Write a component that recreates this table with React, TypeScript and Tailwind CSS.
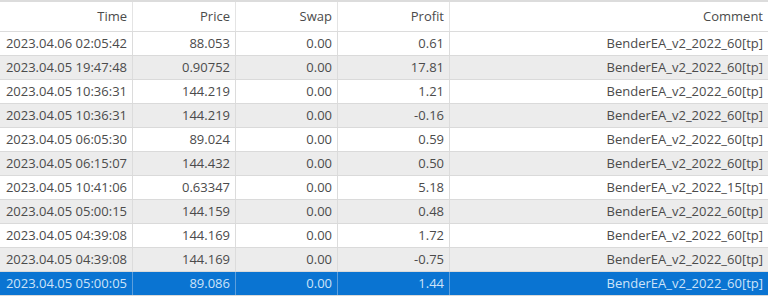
import React from "react";

const rows = [
  ["2023.04.06 02:05:42", "88.053", "0.00", "0.61", "BenderEA_v2_2022_60[tp]"],
  ["2023.04.05 19:47:48", "0.90752", "0.00", "17.81", "BenderEA_v2_2022_60[tp]"],
  ["2023.04.05 10:36:31", "144.219", "0.00", "1.21", "BenderEA_v2_2022_60[tp]"],
  ["2023.04.05 10:36:31", "144.219", "0.00", "-0.16", "BenderEA_v2_2022_60[tp]"],
  ["2023.04.05 06:05:30", "89.024", "0.00", "0.59", "BenderEA_v2_2022_60[tp]"],
  ["2023.04.05 06:15:07", "144.432", "0.00", "0.50", "BenderEA_v2_2022_60[tp]"],
  ["2023.04.05 10:41:06", "0.63347", "0.00", "5.18", "BenderEA_v2_2022_15[tp]"],
  ["2023.04.05 05:00:15", "144.159", "0.00", "0.48", "BenderEA_v2_2022_60[tp]"],
  ["2023.04.05 04:39:08", "144.169", "0.00", "1.72", "BenderEA_v2_2022_60[tp]"],
  ["2023.04.05 04:39:08", "144.169", "0.00", "-0.75", "BenderEA_v2_2022_60[tp]"],
  ["2023.04.05 05:00:05", "89.086", "0.00", "1.44", "BenderEA_v2_2022_60[tp]"],
];

const headers = ["Time", "Price", "Swap", "Profit", "Comment"];
const cols = "grid grid-cols-[133px_103px_102px_112px_1fr]";

export default function App() {
  return (
    <div className="w-[768px] h-[303px] bg-white font-['Open_Sans',sans-serif] text-[13px] text-[#4b4b4b] overflow-hidden">
      <div className={`${cols} h-[32px] border-t-2 border-b border-[#dcdcdc] bg-white`}>
        {headers.map((h, i) => (
          <div key={h} className={`flex items-center justify-end pr-[5px] ${i < 4 ? "border-r border-[#e4e4e4]" : ""}`}>
            {h}
          </div>
        ))}
      </div>
      {rows.map((r, ri) => {
        const selected = ri === rows.length - 1;
        const bg = selected ? "bg-[#0a74d2] text-[#cde3f8]" : ri % 2 === 1 ? "bg-[#ececec]" : "bg-white";
        return (
          <div key={ri} className={`${cols} h-[24px] border-b border-[#dadada] ${bg}`}>
            {r.map((c, ci) => (
              <div
                key={ci}
                className={`flex items-center justify-end pr-[5px] whitespace-nowrap ${ci < 4 ? (selected ? "border-r border-[#5d9fdc]" : "border-r border-[#dcdcdc]") : ""}`}
              >
                {c}
              </div>
            ))}
          </div>
        );
      })}
    </div>
  );
}
